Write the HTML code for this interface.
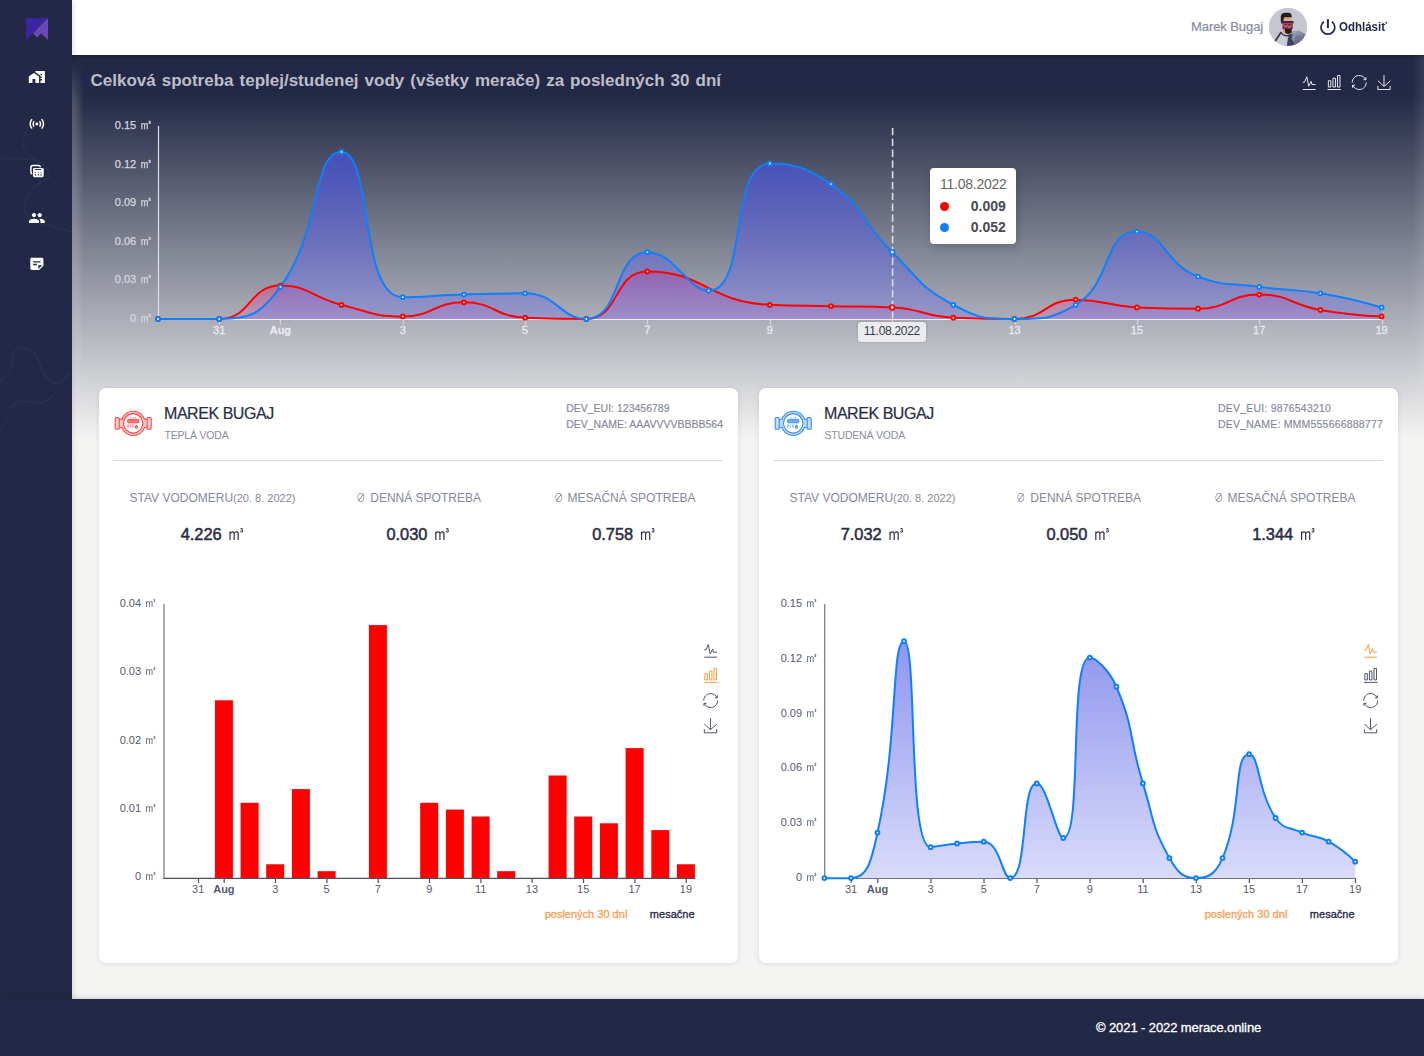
<!DOCTYPE html><html><head><meta charset="utf-8"><title>merace.online</title><style>
*{box-sizing:border-box}
html,body{margin:0;padding:0}
body{width:1424px;height:1056px;position:relative;overflow:hidden;background:#f4f4f3;font-family:'Liberation Sans','Noto Sans CJK SC',sans-serif;color:#2b2d42}
.side{position:absolute;left:0;top:0;width:72px;height:1056px;background:#222845;box-shadow:0 0 6px rgba(0,0,0,.16)}
.hdr{position:absolute;left:72px;top:0;width:1352px;height:55px;background:#fff;box-shadow:0 1px 3px rgba(5,10,40,.45)}
.grad{position:absolute;left:72px;top:55px;width:1352px;height:400px;background:linear-gradient(180deg,#222845 0,#222845 9.500%,#f4f4f3 96%)}
.ov{position:absolute;left:0;top:0;pointer-events:none}
.side{z-index:5}.hdr{z-index:3}.foot{z-index:6}.uname,.avatar,.logout,.pw{z-index:4}.grad:after,.grad:before{content:'';position:absolute;top:0;bottom:0;width:12px}.grad:before{left:0;top:4px;-webkit-mask-image:linear-gradient(180deg,transparent,#000 40px);mask-image:linear-gradient(180deg,transparent,#000 40px);background:linear-gradient(90deg,rgba(244,244,243,.24),rgba(244,244,243,0))}.grad:after{right:0;background:linear-gradient(270deg,rgba(244,244,243,.1),rgba(244,244,243,0))}
.title{position:absolute;left:90.5px;top:70.5px;font-weight:bold;font-size:17px;word-spacing:1.300px;color:#bcbec9;white-space:nowrap}
.uname{position:absolute;left:1191px;top:19px;font-size:13px;color:#888b9e;white-space:nowrap;letter-spacing:-0.08px;-webkit-text-stroke:0.2px #888b9e}
.logout{position:absolute;left:1338.700px;top:19px;font-size:13px;font-weight:bold;color:#222845;white-space:nowrap;transform:scaleX(0.885);transform-origin:0 0}
.avatar{position:absolute;left:1269px;top:8px;width:38px;height:38px;border-radius:50%;overflow:hidden;background:#c9cbd3}
.card{position:absolute;top:388px;width:639px;height:575px;background:#fff;border-radius:7px;box-shadow:0 1px 5px rgba(40,45,70,.12)}
.cicon{position:absolute;left:13.700px;top:22px}
.cname{position:absolute;left:65px;top:17px;-webkit-text-stroke:0.2px #2a2c44;font-size:16px;letter-spacing:-0.45px;color:#2a2c44;white-space:nowrap}
.csub{position:absolute;left:65.500px;top:41px;font-size:10.500px;color:#8a8d9c;white-space:nowrap;letter-spacing:-0.2px}
.cdev{position:absolute;right:15px;top:13.200px;font-size:10.500px;line-height:15.800px;color:#85889a;white-space:nowrap;-webkit-text-stroke:0.15px #85889a}
.cdiv{position:absolute;left:14px;right:15px;top:72px;height:1px;background:#dcdcdf}
.slab{position:absolute;top:102.500px;line-height:14px;width:220px;text-align:center;font-size:12px;color:#85889a;white-space:nowrap}
.slab .sm{font-size:11px;line-height:0}
.slab .dia{font-size:11.500px;line-height:0;display:inline-block;transform:scaleX(.8)}
.sval .b{-webkit-text-stroke:0.5px #2a2c44}
.sval{position:absolute;top:132px;width:220px;text-align:center;font-size:16.400px;color:#2a2c44;white-space:nowrap;margin-left:1px}
.sval .m3{font-size:20px;font-family:'WenQuanYi Zen Hei',sans-serif;font-weight:normal}
.rng{position:absolute;right:43.500px;top:520px;font-size:11px;white-space:nowrap}
.rng .on{color:#fb9d50;-webkit-text-stroke:0.3px #fb9d50}.rng .off{color:#23264a;margin-left:22px;-webkit-text-stroke:0.3px #23264a}
.foot{position:absolute;left:0;top:999px;width:1424px;height:57px;background:#222845;box-shadow:0 0 6px rgba(0,0,0,.22)}
.foot span{position:absolute;left:1096px;top:21px;font-size:13px;color:#fff;-webkit-text-stroke:0.3px #fff;white-space:nowrap;letter-spacing:-0.1px}
.tip{position:absolute;left:930px;top:168px;width:85.800px;height:75.500px;background:#fff;border-radius:4px;box-shadow:1px 2px 10px rgba(0,0,0,.2);font-size:14px;color:#666}
.tip .d{position:absolute;left:10px;top:8px;letter-spacing:-0.25px}
.tip .r{position:absolute;left:10px;right:10px;font-weight:bold;color:#484a54;text-align:right}
.tip .dot{position:absolute;left:0;top:4px;width:9px;height:9px;border-radius:50%}
.apl{position:absolute;left:858px;top:322px;width:67.700px;height:19.500px;background:#ececef;border-radius:3px;font-size:12px;line-height:19.500px;text-align:center;color:#363a4e;letter-spacing:-0.3px;box-shadow:0 0 3px rgba(0,0,0,.15)}
</style></head><body>
<div class="grad"></div>
<div class="hdr"></div>
<div class="side"><svg class="ov" width="72" height="1056" viewBox="0 0 72 1056"><g fill="none" stroke="#2b3151" stroke-width="1.4" stroke-linecap="round" stroke-linejoin="round"><path d="M26 131C24 137 22 141 23 145S30 157 36 160S46 165 49 172S42 181 37 185S27 193 25.500 200S23 212 28 217S45 225 58 228L72 232"/><path d="M0 158C10 160 22 158 34 160"/><path d="M23.500 348c-5-1-9 2-10 6s-1 12-4 18-8 6-9 10"/><path d="M23.500 348c6 1 12 3 14 9s4 14 8 19 8 8 11 8 10-6 14-12"/><path d="M9.500 410c3-6 8-9 13-9s13 3 19 2 9-5 12-8"/><path d="M0 430c3-4 6-8 8-12"/></g><path d="M26 18H48L26 40Z" fill="#3a24a0"/><path d="M48 18V40L41 33.500L37 37.500L33 33.200Z" fill="#6a49b6"/><path d="M26 18V40L33 33.200L26 26Z" fill="#3a24a0"/><path transform="matrix(0.7318 0 0 0.6722 28.068 68.983)" d="M1 11v10h5v-6h4v6h5V11L8 6l-7 5zM10 3v1.970l7 5V11h2v2h-2v2h2v2h-2v4h6V3H10zm9 6h-2V7h2v2z" fill="#fff" fill-rule="evenodd"/><path transform="matrix(0.7350 0 0 0.7355 28.030 115.074)" d="M7.760 16.240C6.670 15.160 6 13.660 6 12s.67-3.160 1.760-4.240l1.420 1.420C8.450 9.900 8 10.900 8 12c0 1.100.45 2.100 1.170 2.830l-1.410 1.410zm8.480 0C17.330 15.160 18 13.660 18 12s-.67-3.160-1.760-4.240l-1.420 1.420C15.550 9.900 16 10.900 16 12c0 1.100-.45 2.100-1.170 2.830l1.410 1.410zM12 10c-1.100 0-2 .9-2 2s.9 2 2 2 2-.9 2-2-.9-2-2-2zm8 2c0 2.210-.9 4.210-2.350 5.650l1.420 1.420C20.880 17.260 22 14.760 22 12s-1.120-5.260-2.930-7.070l-1.420 1.420C19.100 7.790 20 9.790 20 12zM6.350 6.350L4.930 4.930C3.120 6.740 2 9.240 2 12s1.120 5.260 2.930 7.070l1.420-1.420C4.900 16.210 4 14.210 4 12s.9-4.210 2.350-5.650z" fill="#fff" /><rect x="30.900" y="165.600" width="9.400" height="8.100" rx="1.800" fill="none" stroke="#fff" stroke-width="1.500"/><rect x="32.300" y="167.200" width="12" height="10.600" rx="1.800" fill="#222845"/><rect x="33" y="167.900" width="10.700" height="9.300" rx="1.400" fill="#fff"/><rect x="35" y="169.100" width="6.200" height=".9" rx=".4" fill="#222845"/><rect x="34.90" y="171.900" width="1.100" height="1" fill="#222845" opacity=".8"/><rect x="34.90" y="173.900" width="1.100" height="1.900" fill="#222845" opacity=".75"/><rect x="37.75" y="171.900" width="1.100" height="1" fill="#222845" opacity=".8"/><rect x="37.75" y="173.900" width="1.100" height="1.900" fill="#222845" opacity=".75"/><rect x="40.45" y="171.900" width="1.100" height="1" fill="#222845" opacity=".8"/><rect x="40.45" y="173.900" width="1.100" height="1.900" fill="#222845" opacity=".75"/><path transform="matrix(0.7227 0 0 0.7286 28.177 209.257)" d="M16 11c1.660 0 2.990-1.340 2.990-3S17.660 5 16 5c-1.660 0-3 1.340-3 3s1.340 3 3 3zm-8 0c1.660 0 2.990-1.340 2.990-3S9.660 5 8 5C6.340 5 5 6.340 5 8s1.340 3 3 3zm0 2c-2.330 0-7 1.170-7 3.500V19h14v-2.500c0-2.330-4.670-3.500-7-3.500zm8 0c-.29 0-.62.020-.97.050 1.160.84 1.970 1.970 1.970 3.450V19h6v-2.500c0-2.330-4.670-3.500-7-3.500z" fill="#fff" /><path transform="matrix(0.7278 0 0 0.6722 28.117 255.783)" d="M19 3H4.990C3.890 3 3 3.900 3 5l.010 14c0 1.100.89 2 1.990 2h10l6-6V5c0-1.100-.9-2-2-2zM7 8h10v2H7V8zm5 6H7v-2h5v2zm2 5.500V14h5.500L14 19.500z" fill="#fff" fill-rule="evenodd"/></svg></div>
<div class="title">Celková spotreba teplej/studenej vody (všetky merače) za posledných 30 dní</div>
<div class="uname">Marek Bugaj</div>
<div class="avatar"><svg width="38" height="38" viewBox="0 0 38 38"><defs><filter id="ab" x="-10%" y="-10%" width="120%" height="120%"><feGaussianBlur stdDeviation="0.45"/></filter><linearGradient id="aj" x1="0" y1="0" x2="1" y2="1"><stop offset="0" stop-color="#b4bac9"/><stop offset=".5" stop-color="#7d859c"/><stop offset="1" stop-color="#3f4662"/></linearGradient></defs><rect width="38" height="38" fill="#c4c7d1"/><g filter="url(#ab)">
<path d="M21.500 23.500L30 22.500L38 27V38H17.500L19 27Z" fill="url(#aj)"/><path d="M19.500 28L24 25.500L22.500 31L27 38H18Z" fill="#3c4360"/><path d="M27 27L36 30L30 38H25Z" fill="#6a728b" opacity=".8"/>
<path d="M11.500 25.500L18.500 27.500L17.500 38H7Z" fill="#c9ccd6"/><path d="M12.200 24L6 33.500" stroke="#3a3444" stroke-width="1.700" fill="none"/><path d="M12 24.500c2 3.500 6 4.300 9.500 2" stroke="#2b2430" stroke-width="1.300" fill="none"/>
<path d="M14 19.500H19V26.500Q16 26.500 14 24Z" fill="#d2a08a"/>
<rect x="14.300" y="8.500" width="8" height="5" fill="#d9a890"/>
<path d="M11.800 13.500V8.500Q12 4.800 16.500 4.800H19.500Q23 5 22.800 9.200H15.200L14.200 13.500Z" fill="#2b1a15"/>
<rect x="12" y="13" width="12.500" height="2.500" fill="#521c40"/>
<path d="M13.500 15.500H23.700V21H13.500Z" fill="#7c2c52"/><path d="M14.500 16.500l2 2.600 2-1.800 1.800 2.600 2-2.800" stroke="#d8773c" stroke-width="1.100" fill="none"/>
<path d="M15.500 20.800H22.700V24.500Q19.500 27 16.500 25Z" fill="#2b1a15"/></g></svg></div>
<svg class="ov pw" style="left:1318px;top:17px" width="20" height="20" viewBox="0 0 20 20"><path d="M5.900 4.700A6.900 6.900 0 1 0 13.900 4.700" fill="none" stroke="#222845" stroke-width="1.700"/><path d="M9.900 2.100V11" stroke="#222845" stroke-width="2"/></svg>
<div class="logout">Odhlásiť</div>
<div class="card" style="left:99px"><div class="cicon"><svg width="41" height="27" viewBox="0 0 41 27"><g fill="none" stroke="#fb4545" stroke-width="1.05"><circle cx="20.2" cy="13.35" r="12.05" fill="#ffc9c9"/><rect x="6.20" y="9.200" width="3.600" height="8.400" fill="#ffc9c9" stroke="none"/><path d="M9.60 9.200H6.20M9.60 17.600H6.20" stroke-width="1"/><rect x="2.20" y="7.500" width="4.000" height="11.800" rx="1" fill="#ffc9c9"/><path d="M4.20 9.300V17.600" stroke="#fff" stroke-width="1" opacity=".4"/><rect x="30.60" y="9.200" width="3.600" height="8.400" fill="#ffc9c9" stroke="none"/><path d="M30.80 9.200H34.20M30.80 17.600H34.20" stroke-width="1"/><rect x="34.20" y="7.500" width="4.000" height="11.800" rx="1" fill="#ffc9c9"/><path d="M36.20 9.300V17.600" stroke="#fff" stroke-width="1" opacity=".4"/><circle cx="20.2" cy="13.35" r="9.700" fill="#fff" stroke-width="1.150"/></g><rect x="14.60" y="9.400" width="11.200" height="3.400" rx=".9" fill="#ff7575" stroke="#fb4545" stroke-width="1"/><rect x="17.30" y="7" width="1.2" height=".9" rx=".4" fill="#fb4545"/><rect x="19.70" y="7" width="1.0" height=".9" rx=".4" fill="#fb4545"/><rect x="22.00" y="7" width="1.2" height=".9" rx=".4" fill="#fb4545"/><rect x="14.20" y="14.300" width="1.7" height="3.400" fill="#ff7575" opacity=".75"/><rect x="16.80" y="14.300" width="1.2" height="3.400" fill="#ff7575" opacity=".75"/><rect x="19.10" y="14.300" width="1.7" height="3.400" fill="#ff7575" opacity=".75"/><path d="M23.40 14.200c-.2 1-1.700 1.600-1.700 2.800a1.700 1.700 0 0 0 3.400 0c0-1.200-1.500-1.800-1.700-2.800z" fill="#fb4545"/><circle cx="23.40" cy="17.050" r=".6" fill="#ffc9c9"/></svg></div><div class="cname">MAREK BUGAJ</div><div class="csub">TEPLÁ VODA</div><div class="cdev" style="letter-spacing:0px">DEV_EUI: 123456789<br>DEV_NAME: AAAVVVVBBBB564</div><div class="cdiv"></div><div class="slab" style="left:3.5px">STAV VODOMERU<span class="sm">(20. 8. 2022)</span></div><div class="sval" style="left:3.5px"><span class="b">4.226</span> <span class="m3">㎥</span></div><div class="slab" style="left:209.2px"><span class="dia">∅</span> DENNÁ SPOTREBA</div><div class="sval" style="left:209.2px"><span class="b">0.030</span> <span class="m3">㎥</span></div><div class="slab" style="left:415px"><span class="dia">∅</span> MESAČNÁ SPOTREBA</div><div class="sval" style="left:415px"><span class="b">0.758</span> <span class="m3">㎥</span></div><div class="rng"><span class="on">poslených 30 dní</span><span class="off">mesačne</span></div></div>
<div class="card" style="left:759px"><div class="cicon"><svg width="41" height="27" viewBox="0 0 41 27"><g fill="none" stroke="#3b8fe2" stroke-width="1.05"><circle cx="20.2" cy="13.35" r="12.05" fill="#b9d9f9"/><rect x="6.20" y="9.200" width="3.600" height="8.400" fill="#b9d9f9" stroke="none"/><path d="M9.60 9.200H6.20M9.60 17.600H6.20" stroke-width="1"/><rect x="2.20" y="7.500" width="4.000" height="11.800" rx="1" fill="#b9d9f9"/><path d="M4.20 9.300V17.600" stroke="#fff" stroke-width="1" opacity=".4"/><rect x="30.60" y="9.200" width="3.600" height="8.400" fill="#b9d9f9" stroke="none"/><path d="M30.80 9.200H34.20M30.80 17.600H34.20" stroke-width="1"/><rect x="34.20" y="7.500" width="4.000" height="11.800" rx="1" fill="#b9d9f9"/><path d="M36.20 9.300V17.600" stroke="#fff" stroke-width="1" opacity=".4"/><circle cx="20.2" cy="13.35" r="9.700" fill="#fff" stroke-width="1.150"/></g><rect x="14.60" y="9.400" width="11.200" height="3.400" rx=".9" fill="#6eb0f0" stroke="#3b8fe2" stroke-width="1"/><rect x="17.30" y="7" width="1.2" height=".9" rx=".4" fill="#3b8fe2"/><rect x="19.70" y="7" width="1.0" height=".9" rx=".4" fill="#3b8fe2"/><rect x="22.00" y="7" width="1.2" height=".9" rx=".4" fill="#3b8fe2"/><rect x="14.20" y="14.300" width="1.7" height="3.400" fill="#6eb0f0" opacity=".75"/><rect x="16.80" y="14.300" width="1.2" height="3.400" fill="#6eb0f0" opacity=".75"/><rect x="19.10" y="14.300" width="1.7" height="3.400" fill="#6eb0f0" opacity=".75"/><path d="M23.40 14.200c-.2 1-1.700 1.600-1.700 2.800a1.700 1.700 0 0 0 3.400 0c0-1.200-1.500-1.800-1.700-2.800z" fill="#3b8fe2"/><circle cx="23.40" cy="17.050" r=".6" fill="#b9d9f9"/></svg></div><div class="cname">MAREK BUGAJ</div><div class="csub">STUDENÁ VODA</div><div class="cdev" style="letter-spacing:0.2px">DEV_EUI: 9876543210<br>DEV_NAME: MMM555666888777</div><div class="cdiv"></div><div class="slab" style="left:3.5px">STAV VODOMERU<span class="sm">(20. 8. 2022)</span></div><div class="sval" style="left:3.5px"><span class="b">7.032</span> <span class="m3">㎥</span></div><div class="slab" style="left:209.2px"><span class="dia">∅</span> DENNÁ SPOTREBA</div><div class="sval" style="left:209.2px"><span class="b">0.050</span> <span class="m3">㎥</span></div><div class="slab" style="left:415px"><span class="dia">∅</span> MESAČNÁ SPOTREBA</div><div class="sval" style="left:415px"><span class="b">1.344</span> <span class="m3">㎥</span></div><div class="rng"><span class="on">poslených 30 dní</span><span class="off">mesačne</span></div></div>
<div class="foot"><span>© 2021 - 2022 merace.online</span></div>
<svg class="ov" width="1424" height="1056" viewBox="0 0 1424 1056" font-family="Liberation Sans, Noto Sans CJK SC, sans-serif"><defs>
<linearGradient id="gb" x1="0" y1="151" x2="0" y2="319" gradientUnits="userSpaceOnUse"><stop offset="0" stop-color="#4450be" stop-opacity="0.95"/><stop offset="1" stop-color="#7d7fe0" stop-opacity="0.45"/></linearGradient>
<linearGradient id="gr" x1="0" y1="270" x2="0" y2="319" gradientUnits="userSpaceOnUse"><stop offset="0" stop-color="#ff1048" stop-opacity="0.5"/><stop offset="1" stop-color="#e060c0" stop-opacity="0.24"/></linearGradient>
<linearGradient id="gc" x1="0" y1="640" x2="0" y2="878" gradientUnits="userSpaceOnUse"><stop offset="0" stop-color="#8f95ee"/><stop offset="1" stop-color="#d9dbfa"/></linearGradient>
</defs>
<path d="M158.5 126V320" stroke="#dedfe4" stroke-width="1.2" fill="none"/>
<path d="M219.5 320v4.5" stroke="#d6d7dc" stroke-width="1.3"/>
<text x="219.2" y="334" text-anchor="middle" font-size="11" font-weight="normal" fill="#e9e9ee" stroke="#e9e9ee" stroke-width="0.3">31</text>
<path d="M280.5 320v4.5" stroke="#d6d7dc" stroke-width="1.3"/>
<text x="280.4" y="334" text-anchor="middle" font-size="11" font-weight="bold" fill="#e9e9ee" stroke="#e9e9ee" stroke-width="0.3">Aug</text>
<path d="M403.5 320v4.5" stroke="#d6d7dc" stroke-width="1.3"/>
<text x="402.7" y="334" text-anchor="middle" font-size="11" font-weight="normal" fill="#e9e9ee" stroke="#e9e9ee" stroke-width="0.3">3</text>
<path d="M525.5 320v4.5" stroke="#d6d7dc" stroke-width="1.3"/>
<text x="525.1" y="334" text-anchor="middle" font-size="11" font-weight="normal" fill="#e9e9ee" stroke="#e9e9ee" stroke-width="0.3">5</text>
<path d="M647.5 320v4.5" stroke="#d6d7dc" stroke-width="1.3"/>
<text x="647.4" y="334" text-anchor="middle" font-size="11" font-weight="normal" fill="#e9e9ee" stroke="#e9e9ee" stroke-width="0.3">7</text>
<path d="M770.5 320v4.5" stroke="#d6d7dc" stroke-width="1.3"/>
<text x="769.8" y="334" text-anchor="middle" font-size="11" font-weight="normal" fill="#e9e9ee" stroke="#e9e9ee" stroke-width="0.3">9</text>
<path d="M892.5 320v4.5" stroke="#d6d7dc" stroke-width="1.3"/>
<text x="892.2" y="334" text-anchor="middle" font-size="11" font-weight="normal" fill="#e9e9ee" stroke="#e9e9ee" stroke-width="0.3">11</text>
<path d="M1015.5 320v4.5" stroke="#d6d7dc" stroke-width="1.3"/>
<text x="1014.5" y="334" text-anchor="middle" font-size="11" font-weight="normal" fill="#e9e9ee" stroke="#e9e9ee" stroke-width="0.3">13</text>
<path d="M1137.5 320v4.5" stroke="#d6d7dc" stroke-width="1.3"/>
<text x="1136.9" y="334" text-anchor="middle" font-size="11" font-weight="normal" fill="#e9e9ee" stroke="#e9e9ee" stroke-width="0.3">15</text>
<path d="M1259.5 320v4.5" stroke="#d6d7dc" stroke-width="1.3"/>
<text x="1259.2" y="334" text-anchor="middle" font-size="11" font-weight="normal" fill="#e9e9ee" stroke="#e9e9ee" stroke-width="0.3">17</text>
<path d="M1382.5 320v4.5" stroke="#d6d7dc" stroke-width="1.3"/>
<text x="1381.6" y="334" text-anchor="middle" font-size="11" font-weight="normal" fill="#e9e9ee" stroke="#e9e9ee" stroke-width="0.3">19</text>
<text x="152.8" y="321.9" text-anchor="end" font-size="11" fill="#d6d7de" stroke="#d6d7de" stroke-width="0.25">0 <tspan font-size="13.5" font-family="WenQuanYi Zen Hei, sans-serif">㎥</tspan></text>
<text x="152.8" y="283.3" text-anchor="end" font-size="11" fill="#d6d7de" stroke="#d6d7de" stroke-width="0.25">0.03 <tspan font-size="13.5" font-family="WenQuanYi Zen Hei, sans-serif">㎥</tspan></text>
<text x="152.8" y="244.8" text-anchor="end" font-size="11" fill="#d6d7de" stroke="#d6d7de" stroke-width="0.25">0.06 <tspan font-size="13.5" font-family="WenQuanYi Zen Hei, sans-serif">㎥</tspan></text>
<text x="152.8" y="206.3" text-anchor="end" font-size="11" fill="#d6d7de" stroke="#d6d7de" stroke-width="0.25">0.09 <tspan font-size="13.5" font-family="WenQuanYi Zen Hei, sans-serif">㎥</tspan></text>
<text x="152.8" y="167.7" text-anchor="end" font-size="11" fill="#d6d7de" stroke="#d6d7de" stroke-width="0.25">0.12 <tspan font-size="13.5" font-family="WenQuanYi Zen Hei, sans-serif">㎥</tspan></text>
<text x="152.8" y="129.2" text-anchor="end" font-size="11" fill="#d6d7de" stroke="#d6d7de" stroke-width="0.25">0.15 <tspan font-size="13.5" font-family="WenQuanYi Zen Hei, sans-serif">㎥</tspan></text>
<path d="M158.00 319.00C158.00 319.00 190.58 319.00 219.18 319.00C251.76 319.00 248.50 285.59 280.36 285.59C309.68 285.59 310.49 297.04 341.54 304.87C371.67 312.46 372.26 316.43 402.72 316.43C433.44 316.43 433.38 302.30 463.90 302.30C494.56 302.30 494.02 316.39 525.08 317.71C555.20 319.00 559.26 319.00 586.26 319.00C620.44 319.00 612.64 271.45 647.44 271.45C704.41 271.45 707.90 302.20 769.80 304.87C799.67 306.15 800.39 305.51 830.98 306.15C861.57 306.79 861.78 306.15 892.16 307.44C922.96 308.74 922.54 316.41 953.34 317.71C983.72 319.00 984.65 319.00 1014.52 319.00C1045.83 319.00 1044.51 299.73 1075.70 299.73C1105.69 299.73 1106.17 306.14 1136.88 307.44C1167.35 308.72 1167.86 308.72 1198.06 308.72C1229.04 308.72 1228.72 294.58 1259.24 294.58C1289.90 294.58 1289.44 304.47 1320.42 310.00C1350.62 315.40 1381.60 316.43 1381.60 316.43L1381.60 319.0L158.00 319.0Z" fill="url(#gr)"/>
<path d="M158.00 319.00C158.00 319.00 190.45 319.00 219.18 319.00C251.63 319.00 260.90 313.44 280.36 286.88C322.08 229.92 311.89 151.95 341.54 151.95C373.07 151.95 358.66 297.15 402.72 297.15C419.84 297.15 433.30 295.55 463.90 294.58C494.48 293.62 495.73 293.30 525.08 293.30C556.91 293.30 560.39 319.00 586.26 319.00C621.57 319.00 613.42 252.18 647.44 252.18C674.60 252.18 687.90 290.73 708.62 290.73C749.08 290.73 727.82 163.52 769.80 163.52C789.00 163.52 805.68 165.74 830.98 184.08C866.86 210.08 859.65 220.09 892.16 252.18C920.83 280.48 918.93 286.69 953.34 304.87C980.11 319.00 983.93 319.00 1014.52 319.00C1045.11 319.00 1051.42 319.00 1075.70 304.87C1112.60 283.38 1102.81 231.62 1136.88 231.62C1163.99 231.62 1164.39 264.01 1198.06 276.60C1225.57 286.88 1228.52 282.68 1259.24 286.88C1289.70 291.03 1290.14 288.21 1320.42 293.30C1351.32 298.49 1381.60 307.44 1381.60 307.44L1381.60 319.0L158.00 319.0Z" fill="url(#gb)"/>
<path d="M158 319.5H1382" stroke="#f0f0f3" stroke-width="1.2" fill="none"/>
<path d="M158.00 319.00C158.00 319.00 190.58 319.00 219.18 319.00C251.76 319.00 248.50 285.59 280.36 285.59C309.68 285.59 310.49 297.04 341.54 304.87C371.67 312.46 372.26 316.43 402.72 316.43C433.44 316.43 433.38 302.30 463.90 302.30C494.56 302.30 494.02 316.39 525.08 317.71C555.20 319.00 559.26 319.00 586.26 319.00C620.44 319.00 612.64 271.45 647.44 271.45C704.41 271.45 707.90 302.20 769.80 304.87C799.67 306.15 800.39 305.51 830.98 306.15C861.57 306.79 861.78 306.15 892.16 307.44C922.96 308.74 922.54 316.41 953.34 317.71C983.72 319.00 984.65 319.00 1014.52 319.00C1045.83 319.00 1044.51 299.73 1075.70 299.73C1105.69 299.73 1106.17 306.14 1136.88 307.44C1167.35 308.72 1167.86 308.72 1198.06 308.72C1229.04 308.72 1228.72 294.58 1259.24 294.58C1289.90 294.58 1289.44 304.47 1320.42 310.00C1350.62 315.40 1381.60 316.43 1381.60 316.43" fill="none" stroke="#ff0000" stroke-width="2" stroke-linejoin="round"/>
<path d="M158.00 319.00C158.00 319.00 190.45 319.00 219.18 319.00C251.63 319.00 260.90 313.44 280.36 286.88C322.08 229.92 311.89 151.95 341.54 151.95C373.07 151.95 358.66 297.15 402.72 297.15C419.84 297.15 433.30 295.55 463.90 294.58C494.48 293.62 495.73 293.30 525.08 293.30C556.91 293.30 560.39 319.00 586.26 319.00C621.57 319.00 613.42 252.18 647.44 252.18C674.60 252.18 687.90 290.73 708.62 290.73C749.08 290.73 727.82 163.52 769.80 163.52C789.00 163.52 805.68 165.74 830.98 184.08C866.86 210.08 859.65 220.09 892.16 252.18C920.83 280.48 918.93 286.69 953.34 304.87C980.11 319.00 983.93 319.00 1014.52 319.00C1045.11 319.00 1051.42 319.00 1075.70 304.87C1112.60 283.38 1102.81 231.62 1136.88 231.62C1163.99 231.62 1164.39 264.01 1198.06 276.60C1225.57 286.88 1228.52 282.68 1259.24 286.88C1289.70 291.03 1290.14 288.21 1320.42 293.30C1351.32 298.49 1381.60 307.44 1381.60 307.44" fill="none" stroke="#0f7ffb" stroke-width="2" stroke-linejoin="round"/>
<circle cx="158.0" cy="319.0" r="1.9" fill="#fff" stroke="#ff0000" stroke-width="2"/>
<circle cx="219.2" cy="319.0" r="1.9" fill="#fff" stroke="#ff0000" stroke-width="2"/>
<circle cx="280.4" cy="285.6" r="1.9" fill="#fff" stroke="#ff0000" stroke-width="2"/>
<circle cx="341.5" cy="304.9" r="1.9" fill="#fff" stroke="#ff0000" stroke-width="2"/>
<circle cx="402.7" cy="316.4" r="1.9" fill="#fff" stroke="#ff0000" stroke-width="2"/>
<circle cx="463.9" cy="302.3" r="1.9" fill="#fff" stroke="#ff0000" stroke-width="2"/>
<circle cx="525.1" cy="317.7" r="1.9" fill="#fff" stroke="#ff0000" stroke-width="2"/>
<circle cx="586.3" cy="319.0" r="1.9" fill="#fff" stroke="#ff0000" stroke-width="2"/>
<circle cx="647.4" cy="271.5" r="1.9" fill="#fff" stroke="#ff0000" stroke-width="2"/>
<circle cx="769.8" cy="304.9" r="1.9" fill="#fff" stroke="#ff0000" stroke-width="2"/>
<circle cx="831.0" cy="306.1" r="1.9" fill="#fff" stroke="#ff0000" stroke-width="2"/>
<circle cx="892.2" cy="307.4" r="1.9" fill="#fff" stroke="#ff0000" stroke-width="2"/>
<circle cx="953.3" cy="317.7" r="1.9" fill="#fff" stroke="#ff0000" stroke-width="2"/>
<circle cx="1014.5" cy="319.0" r="1.9" fill="#fff" stroke="#ff0000" stroke-width="2"/>
<circle cx="1075.7" cy="299.7" r="1.9" fill="#fff" stroke="#ff0000" stroke-width="2"/>
<circle cx="1136.9" cy="307.4" r="1.9" fill="#fff" stroke="#ff0000" stroke-width="2"/>
<circle cx="1198.1" cy="308.7" r="1.9" fill="#fff" stroke="#ff0000" stroke-width="2"/>
<circle cx="1259.2" cy="294.6" r="1.9" fill="#fff" stroke="#ff0000" stroke-width="2"/>
<circle cx="1320.4" cy="310.0" r="1.9" fill="#fff" stroke="#ff0000" stroke-width="2"/>
<circle cx="1381.6" cy="316.4" r="1.9" fill="#fff" stroke="#ff0000" stroke-width="2"/>
<circle cx="158.0" cy="319.0" r="1.9" fill="#fff" stroke="#0f7ffb" stroke-width="2"/>
<circle cx="219.2" cy="319.0" r="1.9" fill="#fff" stroke="#0f7ffb" stroke-width="2"/>
<circle cx="280.4" cy="286.9" r="1.9" fill="#fff" stroke="#0f7ffb" stroke-width="2"/>
<circle cx="341.5" cy="151.9" r="1.9" fill="#fff" stroke="#0f7ffb" stroke-width="2"/>
<circle cx="402.7" cy="297.2" r="1.9" fill="#fff" stroke="#0f7ffb" stroke-width="2"/>
<circle cx="463.9" cy="294.6" r="1.9" fill="#fff" stroke="#0f7ffb" stroke-width="2"/>
<circle cx="525.1" cy="293.3" r="1.9" fill="#fff" stroke="#0f7ffb" stroke-width="2"/>
<circle cx="586.3" cy="319.0" r="1.9" fill="#fff" stroke="#0f7ffb" stroke-width="2"/>
<circle cx="647.4" cy="252.2" r="1.9" fill="#fff" stroke="#0f7ffb" stroke-width="2"/>
<circle cx="708.6" cy="290.7" r="1.9" fill="#fff" stroke="#0f7ffb" stroke-width="2"/>
<circle cx="769.8" cy="163.5" r="1.9" fill="#fff" stroke="#0f7ffb" stroke-width="2"/>
<circle cx="831.0" cy="184.1" r="1.9" fill="#fff" stroke="#0f7ffb" stroke-width="2"/>
<circle cx="892.2" cy="252.2" r="1.9" fill="#fff" stroke="#0f7ffb" stroke-width="2"/>
<circle cx="953.3" cy="304.9" r="1.9" fill="#fff" stroke="#0f7ffb" stroke-width="2"/>
<circle cx="1014.5" cy="319.0" r="1.9" fill="#fff" stroke="#0f7ffb" stroke-width="2"/>
<circle cx="1075.7" cy="304.9" r="1.9" fill="#fff" stroke="#0f7ffb" stroke-width="2"/>
<circle cx="1136.9" cy="231.6" r="1.9" fill="#fff" stroke="#0f7ffb" stroke-width="2"/>
<circle cx="1198.1" cy="276.6" r="1.9" fill="#fff" stroke="#0f7ffb" stroke-width="2"/>
<circle cx="1259.2" cy="286.9" r="1.9" fill="#fff" stroke="#0f7ffb" stroke-width="2"/>
<circle cx="1320.4" cy="293.3" r="1.9" fill="#fff" stroke="#0f7ffb" stroke-width="2"/>
<circle cx="1381.6" cy="307.4" r="1.9" fill="#fff" stroke="#0f7ffb" stroke-width="2"/>
<path d="M892.6 128V319" stroke="#dcdce2" stroke-width="1.6" stroke-dasharray="7.3 3.5" fill="none"/>
<circle cx="892.2" cy="252.2" r="2.3" fill="#fff" stroke="#0f7ffb" stroke-width="1.800"/>
<circle cx="892.2" cy="307.4" r="2.3" fill="#fff" stroke="#ff0000" stroke-width="1.800"/>
<path d="M164 604V878.5" stroke="#7b7e8f" stroke-width="1.3"/>
<rect x="214.9" y="700.3" width="18.0" height="177.7" fill="#ff0000"/>
<rect x="240.6" y="802.8" width="18.0" height="75.2" fill="#ff0000"/>
<rect x="266.2" y="864.3" width="18.0" height="13.7" fill="#ff0000"/>
<rect x="291.9" y="789.1" width="18.0" height="88.9" fill="#ff0000"/>
<rect x="317.6" y="871.2" width="18.0" height="6.8" fill="#ff0000"/>
<rect x="368.9" y="625.1" width="18.0" height="252.9" fill="#ff0000"/>
<rect x="420.2" y="802.8" width="18.0" height="75.2" fill="#ff0000"/>
<rect x="445.9" y="809.6" width="18.0" height="68.4" fill="#ff0000"/>
<rect x="471.6" y="816.5" width="18.0" height="61.5" fill="#ff0000"/>
<rect x="497.2" y="871.2" width="18.0" height="6.8" fill="#ff0000"/>
<rect x="548.6" y="775.5" width="18.0" height="102.5" fill="#ff0000"/>
<rect x="574.2" y="816.5" width="18.0" height="61.5" fill="#ff0000"/>
<rect x="599.9" y="823.3" width="18.0" height="54.7" fill="#ff0000"/>
<rect x="625.6" y="748.1" width="18.0" height="129.9" fill="#ff0000"/>
<rect x="651.3" y="830.1" width="18.0" height="47.9" fill="#ff0000"/>
<rect x="676.9" y="864.3" width="18.0" height="13.7" fill="#ff0000"/>
<path d="M163.4 878.4H695.2" stroke="#4b4f64" stroke-width="1.2"/>
<path d="M198.5 879v4" stroke="#4b4f64" stroke-width="1.2"/>
<text x="198.2" y="892.9" text-anchor="middle" font-size="11" font-weight="normal" fill="#565a6e">31</text>
<path d="M224.2 879v4" stroke="#4b4f64" stroke-width="1.2"/>
<text x="223.9" y="892.9" text-anchor="middle" font-size="11" font-weight="bold" fill="#565a6e">Aug</text>
<path d="M275.5 879v4" stroke="#4b4f64" stroke-width="1.2"/>
<text x="275.2" y="892.9" text-anchor="middle" font-size="11" font-weight="normal" fill="#565a6e">3</text>
<path d="M326.9 879v4" stroke="#4b4f64" stroke-width="1.2"/>
<text x="326.6" y="892.9" text-anchor="middle" font-size="11" font-weight="normal" fill="#565a6e">5</text>
<path d="M378.2 879v4" stroke="#4b4f64" stroke-width="1.2"/>
<text x="377.9" y="892.9" text-anchor="middle" font-size="11" font-weight="normal" fill="#565a6e">7</text>
<path d="M429.5 879v4" stroke="#4b4f64" stroke-width="1.2"/>
<text x="429.2" y="892.9" text-anchor="middle" font-size="11" font-weight="normal" fill="#565a6e">9</text>
<path d="M480.9 879v4" stroke="#4b4f64" stroke-width="1.2"/>
<text x="480.6" y="892.9" text-anchor="middle" font-size="11" font-weight="normal" fill="#565a6e">11</text>
<path d="M532.2 879v4" stroke="#4b4f64" stroke-width="1.2"/>
<text x="531.9" y="892.9" text-anchor="middle" font-size="11" font-weight="normal" fill="#565a6e">13</text>
<path d="M583.5 879v4" stroke="#4b4f64" stroke-width="1.2"/>
<text x="583.2" y="892.9" text-anchor="middle" font-size="11" font-weight="normal" fill="#565a6e">15</text>
<path d="M634.9 879v4" stroke="#4b4f64" stroke-width="1.2"/>
<text x="634.6" y="892.9" text-anchor="middle" font-size="11" font-weight="normal" fill="#565a6e">17</text>
<path d="M686.2 879v4" stroke="#4b4f64" stroke-width="1.2"/>
<text x="685.9" y="892.9" text-anchor="middle" font-size="11" font-weight="normal" fill="#565a6e">19</text>
<text x="157.6" y="880.4" text-anchor="end" font-size="11" fill="#565a6e">0 <tspan font-size="13.5" font-family="WenQuanYi Zen Hei, sans-serif">㎥</tspan></text>
<text x="157.6" y="812.0" text-anchor="end" font-size="11" fill="#565a6e">0.01 <tspan font-size="13.5" font-family="WenQuanYi Zen Hei, sans-serif">㎥</tspan></text>
<text x="157.6" y="743.7" text-anchor="end" font-size="11" fill="#565a6e">0.02 <tspan font-size="13.5" font-family="WenQuanYi Zen Hei, sans-serif">㎥</tspan></text>
<text x="157.6" y="675.3" text-anchor="end" font-size="11" fill="#565a6e">0.03 <tspan font-size="13.5" font-family="WenQuanYi Zen Hei, sans-serif">㎥</tspan></text>
<text x="157.6" y="607.0" text-anchor="end" font-size="11" fill="#565a6e">0.04 <tspan font-size="13.5" font-family="WenQuanYi Zen Hei, sans-serif">㎥</tspan></text>
<path d="M824.7 604V878.5" stroke="#7b7e8f" stroke-width="1.3"/>
<path d="M824 878.5H1355.9" stroke="#4b4f64" stroke-width="1.2"/>
<path d="M851.3 879v4" stroke="#4b4f64" stroke-width="1.2"/>
<text x="851.0" y="892.9" text-anchor="middle" font-size="11" font-weight="normal" fill="#565a6e">31</text>
<path d="M877.8 879v4" stroke="#4b4f64" stroke-width="1.2"/>
<text x="877.5" y="892.9" text-anchor="middle" font-size="11" font-weight="bold" fill="#565a6e">Aug</text>
<path d="M930.9 879v4" stroke="#4b4f64" stroke-width="1.2"/>
<text x="930.6" y="892.9" text-anchor="middle" font-size="11" font-weight="normal" fill="#565a6e">3</text>
<path d="M984.0 879v4" stroke="#4b4f64" stroke-width="1.2"/>
<text x="983.7" y="892.9" text-anchor="middle" font-size="11" font-weight="normal" fill="#565a6e">5</text>
<path d="M1037.0 879v4" stroke="#4b4f64" stroke-width="1.2"/>
<text x="1036.8" y="892.9" text-anchor="middle" font-size="11" font-weight="normal" fill="#565a6e">7</text>
<path d="M1090.1 879v4" stroke="#4b4f64" stroke-width="1.2"/>
<text x="1089.8" y="892.9" text-anchor="middle" font-size="11" font-weight="normal" fill="#565a6e">9</text>
<path d="M1143.2 879v4" stroke="#4b4f64" stroke-width="1.2"/>
<text x="1142.9" y="892.9" text-anchor="middle" font-size="11" font-weight="normal" fill="#565a6e">11</text>
<path d="M1196.3 879v4" stroke="#4b4f64" stroke-width="1.2"/>
<text x="1196.0" y="892.9" text-anchor="middle" font-size="11" font-weight="normal" fill="#565a6e">13</text>
<path d="M1249.4 879v4" stroke="#4b4f64" stroke-width="1.2"/>
<text x="1249.1" y="892.9" text-anchor="middle" font-size="11" font-weight="normal" fill="#565a6e">15</text>
<path d="M1302.4 879v4" stroke="#4b4f64" stroke-width="1.2"/>
<text x="1302.1" y="892.9" text-anchor="middle" font-size="11" font-weight="normal" fill="#565a6e">17</text>
<path d="M1355.5 879v4" stroke="#4b4f64" stroke-width="1.2"/>
<text x="1355.2" y="892.9" text-anchor="middle" font-size="11" font-weight="normal" fill="#565a6e">19</text>
<text x="818.6" y="880.5" text-anchor="end" font-size="11" fill="#565a6e">0 <tspan font-size="13.5" font-family="WenQuanYi Zen Hei, sans-serif">㎥</tspan></text>
<text x="818.6" y="825.9" text-anchor="end" font-size="11" fill="#565a6e">0.03 <tspan font-size="13.5" font-family="WenQuanYi Zen Hei, sans-serif">㎥</tspan></text>
<text x="818.6" y="771.2" text-anchor="end" font-size="11" fill="#565a6e">0.06 <tspan font-size="13.5" font-family="WenQuanYi Zen Hei, sans-serif">㎥</tspan></text>
<text x="818.6" y="716.5" text-anchor="end" font-size="11" fill="#565a6e">0.09 <tspan font-size="13.5" font-family="WenQuanYi Zen Hei, sans-serif">㎥</tspan></text>
<text x="818.6" y="661.8" text-anchor="end" font-size="11" fill="#565a6e">0.12 <tspan font-size="13.5" font-family="WenQuanYi Zen Hei, sans-serif">㎥</tspan></text>
<text x="818.6" y="607.1" text-anchor="end" font-size="11" fill="#565a6e">0.15 <tspan font-size="13.5" font-family="WenQuanYi Zen Hei, sans-serif">㎥</tspan></text>
<path d="M824.43 878.15C824.43 878.15 842.09 878.15 850.97 878.15C868.63 878.15 871.82 857.98 877.51 832.57C898.36 739.49 891.26 641.16 904.05 641.16C917.80 641.16 907.08 847.16 930.59 847.16C933.62 847.16 943.81 844.89 957.13 843.51C970.35 842.15 973.82 841.69 983.67 841.69C1000.36 841.69 1001.87 878.15 1010.21 878.15C1028.41 878.15 1020.34 783.35 1036.75 783.35C1046.88 783.35 1056.66 838.04 1063.29 838.04C1083.20 838.04 1068.01 657.57 1089.83 657.57C1094.55 657.57 1108.87 668.97 1116.37 686.74C1135.41 731.87 1128.10 735.53 1142.91 783.35C1154.64 821.21 1150.75 824.70 1169.45 858.10C1177.29 872.10 1182.72 878.15 1195.99 878.15C1209.26 878.15 1216.25 872.77 1222.53 858.10C1242.79 810.79 1232.93 754.19 1249.07 754.19C1259.47 754.19 1257.16 790.74 1275.61 817.99C1283.70 829.93 1288.37 826.42 1302.15 832.57C1314.91 838.27 1316.55 835.02 1328.69 841.69C1343.09 849.60 1355.23 861.74 1355.23 861.74L1355.23 878.15L824.43 878.15Z" fill="url(#gc)"/>
<path d="M824.43 878.15C824.43 878.15 842.09 878.15 850.97 878.15C868.63 878.15 871.82 857.98 877.51 832.57C898.36 739.49 891.26 641.16 904.05 641.16C917.80 641.16 907.08 847.16 930.59 847.16C933.62 847.16 943.81 844.89 957.13 843.51C970.35 842.15 973.82 841.69 983.67 841.69C1000.36 841.69 1001.87 878.15 1010.21 878.15C1028.41 878.15 1020.34 783.35 1036.75 783.35C1046.88 783.35 1056.66 838.04 1063.29 838.04C1083.20 838.04 1068.01 657.57 1089.83 657.57C1094.55 657.57 1108.87 668.97 1116.37 686.74C1135.41 731.87 1128.10 735.53 1142.91 783.35C1154.64 821.21 1150.75 824.70 1169.45 858.10C1177.29 872.10 1182.72 878.15 1195.99 878.15C1209.26 878.15 1216.25 872.77 1222.53 858.10C1242.79 810.79 1232.93 754.19 1249.07 754.19C1259.47 754.19 1257.16 790.74 1275.61 817.99C1283.70 829.93 1288.37 826.42 1302.15 832.57C1314.91 838.27 1316.55 835.02 1328.69 841.69C1343.09 849.60 1355.23 861.74 1355.23 861.74" fill="none" stroke="#0f7ffb" stroke-width="2" stroke-linejoin="round"/>
<circle cx="824.4" cy="878.1" r="1.9" fill="#fff" stroke="#0f7ffb" stroke-width="2"/>
<circle cx="851.0" cy="878.1" r="1.9" fill="#fff" stroke="#0f7ffb" stroke-width="2"/>
<circle cx="877.5" cy="832.6" r="1.9" fill="#fff" stroke="#0f7ffb" stroke-width="2"/>
<circle cx="904.0" cy="641.2" r="1.9" fill="#fff" stroke="#0f7ffb" stroke-width="2"/>
<circle cx="930.6" cy="847.2" r="1.9" fill="#fff" stroke="#0f7ffb" stroke-width="2"/>
<circle cx="957.1" cy="843.5" r="1.9" fill="#fff" stroke="#0f7ffb" stroke-width="2"/>
<circle cx="983.7" cy="841.7" r="1.9" fill="#fff" stroke="#0f7ffb" stroke-width="2"/>
<circle cx="1010.2" cy="878.1" r="1.9" fill="#fff" stroke="#0f7ffb" stroke-width="2"/>
<circle cx="1036.8" cy="783.4" r="1.9" fill="#fff" stroke="#0f7ffb" stroke-width="2"/>
<circle cx="1063.3" cy="838.0" r="1.9" fill="#fff" stroke="#0f7ffb" stroke-width="2"/>
<circle cx="1089.8" cy="657.6" r="1.9" fill="#fff" stroke="#0f7ffb" stroke-width="2"/>
<circle cx="1116.4" cy="686.7" r="1.9" fill="#fff" stroke="#0f7ffb" stroke-width="2"/>
<circle cx="1142.9" cy="783.4" r="1.9" fill="#fff" stroke="#0f7ffb" stroke-width="2"/>
<circle cx="1169.4" cy="858.1" r="1.9" fill="#fff" stroke="#0f7ffb" stroke-width="2"/>
<circle cx="1196.0" cy="878.1" r="1.9" fill="#fff" stroke="#0f7ffb" stroke-width="2"/>
<circle cx="1222.5" cy="858.1" r="1.9" fill="#fff" stroke="#0f7ffb" stroke-width="2"/>
<circle cx="1249.1" cy="754.2" r="1.9" fill="#fff" stroke="#0f7ffb" stroke-width="2"/>
<circle cx="1275.6" cy="818.0" r="1.9" fill="#fff" stroke="#0f7ffb" stroke-width="2"/>
<circle cx="1302.1" cy="832.6" r="1.9" fill="#fff" stroke="#0f7ffb" stroke-width="2"/>
<circle cx="1328.7" cy="841.7" r="1.9" fill="#fff" stroke="#0f7ffb" stroke-width="2"/>
<circle cx="1355.2" cy="861.7" r="1.9" fill="#fff" stroke="#0f7ffb" stroke-width="2"/>
<path transform="translate(1301.7 75) scale(0.2500)" d="M4.1,28.9h7.1l9.3-22l7.4,38l9.700-19.700l3,12.800h14.900M4.100,58h51.400" fill="none" stroke="#e8e8ee" stroke-width="4.00"/>
<path transform="translate(1326.7 75) scale(0.2500)" d="M6.700,22.900h10V48h-10V22.900zM24.900,13h10v35h-10V13zM43.200,2h10v46h-10V2zM3.100,58h53.700" fill="none" stroke="#e8e8ee" stroke-width="4.00"/>
<path transform="translate(1351.7 75) scale(0.2500)" d="M47,18.900h9.800V8.700M56.300,20.100C52.100,9,40.500,0.600,26.800,2.100C12.600,3.700,1.600,16.200,2.100,30.600M13,41.100H3.100v10.200M3.700,39.900c4.200,11.100,15.800,19.500,29.500,18c14.200-1.600,25.200-14.100,24.700-28.500" fill="none" stroke="#e8e8ee" stroke-width="4.00"/>
<path transform="translate(1376.7 75) scale(0.2500)" d="M4.700,22.900L29.300,45.500L54.700,23.400M4.600,43.600L4.600,58L53.800,58L53.800,43.600M29.200,45.100L29.200,0" fill="none" stroke="#e8e8ee" stroke-width="4.00"/>
<path transform="translate(703.2 642.7) scale(0.2500)" d="M4.1,28.9h7.1l9.3-22l7.4,38l9.700-19.700l3,12.800h14.900M4.100,58h51.400" fill="none" stroke="#4f5369" stroke-width="4.00"/>
<path transform="translate(1363.2 642.7) scale(0.2500)" d="M4.1,28.9h7.1l9.3-22l7.4,38l9.700-19.700l3,12.800h14.900M4.100,58h51.400" fill="none" stroke="#fb9a3e" stroke-width="4.00"/>
<path transform="translate(703.2 667.9000000000001) scale(0.2500)" d="M6.700,22.900h10V48h-10V22.900zM24.900,13h10v35h-10V13zM43.200,2h10v46h-10V2zM3.100,58h53.700" fill="none" stroke="#fb9a3e" stroke-width="4.00"/>
<path transform="translate(1363.2 667.9000000000001) scale(0.2500)" d="M6.700,22.900h10V48h-10V22.900zM24.900,13h10v35h-10V13zM43.200,2h10v46h-10V2zM3.100,58h53.700" fill="none" stroke="#4f5369" stroke-width="4.00"/>
<path transform="translate(703.2 693.1) scale(0.2500)" d="M47,18.900h9.800V8.700M56.300,20.100C52.100,9,40.500,0.600,26.800,2.100C12.600,3.700,1.600,16.200,2.100,30.600M13,41.100H3.100v10.200M3.700,39.900c4.200,11.100,15.800,19.500,29.500,18c14.200-1.600,25.200-14.100,24.700-28.500" fill="none" stroke="#4f5369" stroke-width="4.00"/>
<path transform="translate(1363.2 693.1) scale(0.2500)" d="M47,18.900h9.800V8.700M56.300,20.100C52.100,9,40.500,0.600,26.800,2.100C12.600,3.700,1.600,16.200,2.100,30.600M13,41.100H3.100v10.200M3.700,39.900c4.200,11.100,15.800,19.500,29.500,18c14.200-1.600,25.200-14.100,24.700-28.500" fill="none" stroke="#4f5369" stroke-width="4.00"/>
<path transform="translate(703.2 718.3000000000001) scale(0.2500)" d="M4.700,22.900L29.300,45.500L54.700,23.400M4.600,43.600L4.600,58L53.800,58L53.800,43.600M29.200,45.100L29.200,0" fill="none" stroke="#4f5369" stroke-width="4.00"/>
<path transform="translate(1363.2 718.3000000000001) scale(0.2500)" d="M4.700,22.900L29.300,45.500L54.700,23.400M4.600,43.600L4.600,58L53.800,58L53.800,43.600M29.200,45.100L29.200,0" fill="none" stroke="#4f5369" stroke-width="4.00"/></svg>
<div class="tip"><div class="d">11.08.2022</div><div class="r" style="top:30px"><i class="dot" style="background:#f00"></i>0.009</div><div class="r" style="top:51px"><i class="dot" style="background:#0f7ffb"></i>0.052</div></div>
<div class="apl">11.08.2022</div>
</body></html>
